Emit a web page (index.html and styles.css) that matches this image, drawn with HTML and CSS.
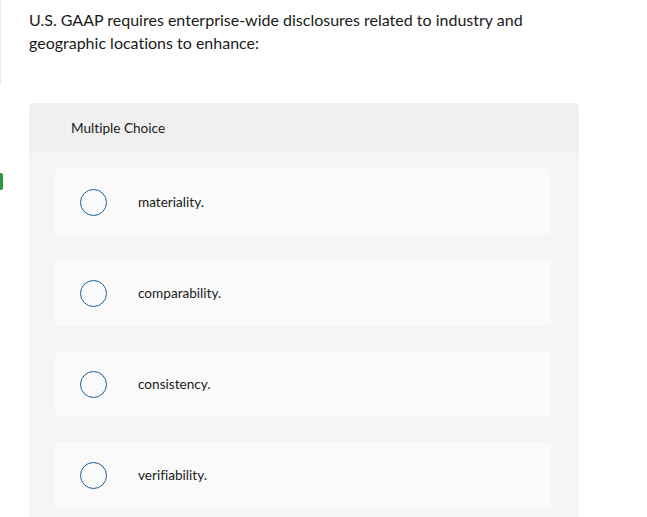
FILE: index.html
```html
<!DOCTYPE html>
<html>
<head>
<meta charset="utf-8">
<link rel="stylesheet" href="styles.css">
</head>
<body>
<div class="page">
  <div class="rail">
    <div class="rail-line"></div>
    <div class="rail-pill"></div>
  </div>
  <div class="main">
    <p class="question">U.S. GAAP requires enterprise-wide disclosures related to industry and geographic locations to enhance:</p>
    <div class="mc">
      <div class="mc-head">Multiple Choice</div>
      <div class="mc-body">
        <div class="opt"><span class="radio"></span><span class="label">materiality.</span></div>
        <div class="opt"><span class="radio"></span><span class="label">comparability.</span></div>
        <div class="opt"><span class="radio"></span><span class="label">consistency.</span></div>
        <div class="opt"><span class="radio"></span><span class="label">verifiability.</span></div>
      </div>
    </div>
  </div>
</div>
</body>
</html>
```
FILE: styles.css
```css
html, body { margin: 0; padding: 0; background: #fff; }
body { font-family: Lato, "Liberation Sans", sans-serif; color: #1a1a1a; font-variant-ligatures: none; }
.page { display: flex; }
.rail { width: 29px; flex: none; position: relative; }
.rail-line { width: 1px; height: 85px; background: #ececec; }
.rail-pill { position: absolute; left: -1px; top: 173px; width: 4px; height: 17px; border-radius: 2px; background: #2b9a3e; }
.main { width: 550px; }
.question { margin: 8px 0 0; max-width: 540px; font-size: 16px; line-height: 23px; color: #1a1a1a; }
.mc { margin-top: 49px; border-radius: 3px 3px 0 0; overflow: hidden; }
.mc-head { height: 50px; background: #f0f0f0; padding-left: 42px; display: flex; align-items: center; font-size: 13.6px; color: #1a1a1a; }
.mc-body { background: #f5f5f5; padding: 16px 28px 20px 26px; display: flex; flex-direction: column; gap: 25px; }
.opt { height: 66px; background: #fafafa; border-radius: 3px; display: flex; align-items: center; padding-left: 25px; }
.radio { width: 25px; height: 25px; border: 1.5px solid #1d5b96; border-radius: 50%; box-sizing: content-box; flex: none; }
.label { margin-left: 31px; font-size: 13.6px; color: #1a1a1a; }
```
